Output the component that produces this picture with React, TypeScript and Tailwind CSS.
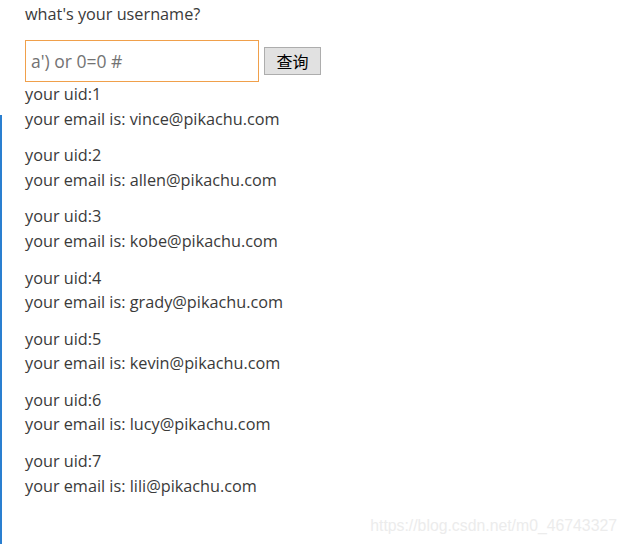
const users = [
  { uid: 1, email: 'vince@pikachu.com' },
  { uid: 2, email: 'allen@pikachu.com' },
  { uid: 3, email: 'kobe@pikachu.com' },
  { uid: 4, email: 'grady@pikachu.com' },
  { uid: 5, email: 'kevin@pikachu.com' },
  { uid: 6, email: 'lucy@pikachu.com' },
  { uid: 7, email: 'lili@pikachu.com' },
];

export default function App() {
  return (
    <div
      className="relative w-[628px] h-[544px] overflow-hidden bg-white text-[#3a3a3a] text-[16.25px]"
      style={{ fontFamily: '"Open Sans", "Noto Sans CJK SC", sans-serif' }}
    >
      <div className="absolute left-0 top-[115px] bottom-0 w-[2px] bg-[#2a7fd0]" />

      <div className="pl-[25px] pt-[2px]">
        <p className="leading-[24px]">what's your username?</p>

        <form className="flex items-center mt-[14px]" onSubmit={(e) => e.preventDefault()}>
          <input
            type="text"
            placeholder="a') or 0=0 #"
            className="w-[234px] h-[42px] border border-[#f0a04b] px-[5px] text-[17.5px] text-[#555] placeholder:text-[#737373] outline-none"
          />
          <button
            type="submit"
            className="ml-[5px] w-[57px] h-[28px] bg-[#e1e1e1] border border-[#adadad] text-[16px] text-black leading-none"
            style={{ fontFamily: '"Noto Sans CJK SC", sans-serif' }}
          >
            查询
          </button>
        </form>

        <div>
          {users.map((u) => (
            <div key={u.uid} className="mb-[12.2px]">
              <p className="leading-[24.5px]">your uid:{u.uid}</p>
              <p className="leading-[24.5px]">your email is: {u.email}</p>
            </div>
          ))}
        </div>
      </div>

      <div
        className="absolute right-[11px] bottom-[10px] text-[15.8px] text-[#ececec] leading-none"
        style={{ fontFamily: '"Liberation Sans", Arial, sans-serif' }}
      >
        https://blog.csdn.net/m0_46743327
      </div>
    </div>
  );
}
